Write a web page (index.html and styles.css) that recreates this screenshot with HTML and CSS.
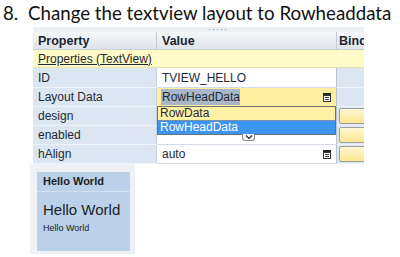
FILE: index.html
```html
<!DOCTYPE html>
<html lang="en">

<head>
    <meta charset="UTF-8">
    <meta name="viewport" content="width=device-width, initial-scale=1.0">
    <title>Rowheaddata</title>
    <link rel="stylesheet" href="styles.css">
</head>

<body>

    <h1 class="step"><span class="num">8.</span>Change the textview layout to Rowheaddata</h1>

    <div class="grid-wrap">
        <div class="grip">
            <svg width="21" height="3" viewBox="0 0 21 3">
                <circle cx="1.5" cy="1.5" r="0.8" fill="#a9b1bb"/>
                <circle cx="5.5" cy="1.5" r="0.8" fill="#a9b1bb"/>
                <circle cx="9.5" cy="1.5" r="0.8" fill="#a9b1bb"/>
                <circle cx="13.5" cy="1.5" r="0.8" fill="#a9b1bb"/>
                <circle cx="17.5" cy="1.5" r="0.8" fill="#a9b1bb"/>
            </svg>
        </div>
        <table class="props">
            <thead>
                <tr>
                    <th class="c-prop">Property</th>
                    <th class="c-val">Value</th>
                    <th class="c-bind">Bind</th>
                </tr>
            </thead>
            <tbody>
                <tr class="group">
                    <td colspan="3"><u>Properties (TextView)</u></td>
                </tr>
                <tr class="r-id">
                    <td class="c-prop">ID</td>
                    <td class="c-val">TVIEW_HELLO</td>
                    <td class="c-bind"></td>
                </tr>
                <tr>
                    <td class="c-prop">Layout Data</td>
                    <td class="c-val editing">
                        <div class="cell">
                            <span class="sel">RowHeadData</span>
                            <svg class="list-icon" width="8" height="9" viewBox="0 0 8 9">
                                <rect x="0" y="0" width="8" height="2" fill="#222"/>
                                <rect x="0.5" y="2.5" width="7" height="6" fill="#fff" stroke="#333"/>
                                <path d="M2 4.5h4M2 6.5h4" stroke="#333"/>
                            </svg>
                            <div class="dropdown">
                                <div class="opt">RowData</div>
                                <div class="opt active">RowHeadData</div>
                                <div class="more">
                                    <svg width="8" height="4" viewBox="0 0 8 4"><path d="M1 0.5l3 3 3-3" fill="none" stroke="#333" stroke-width="1.2"/></svg>
                                </div>
                            </div>
                        </div>
                    </td>
                    <td class="c-bind"></td>
                </tr>
                <tr>
                    <td class="c-prop">design</td>
                    <td class="c-val"></td>
                    <td class="c-bind"><div class="bind-btn"></div></td>
                </tr>
                <tr>
                    <td class="c-prop">enabled</td>
                    <td class="c-val"></td>
                    <td class="c-bind"><div class="bind-btn"></div></td>
                </tr>
                <tr>
                    <td class="c-prop">hAlign</td>
                    <td class="c-val">
                        <div class="cell">
                            <span>auto</span>
                            <svg class="list-icon" width="8" height="9" viewBox="0 0 8 9">
                                <rect x="0" y="0" width="8" height="2" fill="#222"/>
                                <rect x="0.5" y="2.5" width="7" height="6" fill="#fff" stroke="#333"/>
                                <path d="M2 4.5h4M2 6.5h4" stroke="#333"/>
                            </svg>
                        </div>
                    </td>
                    <td class="c-bind"><div class="bind-btn"></div></td>
                </tr>
            </tbody>
        </table>
    </div>

    <div class="preview">
        <div class="preview-inner">
            <div class="pv-head">Hello World</div>
            <div class="pv-big">Hello World</div>
            <div class="pv-small">Hello World</div>
        </div>
    </div>

</body>

</html>
```

FILE: styles.css
```css
body {
    margin: 0;
    padding: 0;
    background-color: #fff;
    font-family: "Liberation Sans", Arial, sans-serif;
    color: #1e2a36;
}

.step {
    margin: 0;
    padding: 1px 0 0 3px;
    height: 26px;
    font-family: Lato, "Open Sans", sans-serif;
    font-weight: normal;
    font-size: 18.7px;
    line-height: 24px;
    color: #111;
    white-space: nowrap;
}

.step .num {
    display: inline-block;
    width: 25px;
}

.grid-wrap {
    margin-left: 33px;
    width: 331px;
    overflow: hidden;
}

.grip {
    height: 5px;
    background-color: #eef1f4;
    padding-left: 175px;
    box-sizing: border-box;
    padding-top: 1px;
}

.grip svg {
    display: block;
}

.props {
    border-collapse: collapse;
    table-layout: fixed;
    width: 360px;
    font-size: 12px;
}

.props .c-prop {
    width: 118px;
}

.props .c-val {
    width: 174px;
}

.props .c-bind {
    width: 58px;
}

.props th {
    height: 17px;
    padding: 0 0 0 5px;
    text-align: left;
    font-size: 12.5px;
    background: linear-gradient(#f5f7f9, #dfe4ea);
    border-right: 1px solid #c3cbd5;
    border-bottom: 1px solid #c6ced8;
    color: #1b2530;
    white-space: nowrap;
    overflow: hidden;
}

.props th.c-bind {
    padding-left: 2px;
}

.props td {
    height: 18px;
    padding: 0 0 0 5px;
    border-bottom: 1px solid #d2dbe6;
    white-space: nowrap;
}

.props td.c-prop {
    background-color: #dbe6f2;
    border-bottom-color: #eef3f9;
    border-right: 1px solid #c8d2de;
}

.props td.c-val {
    background-color: #fff;
    border-right: 1px solid #b9c3cf;
}

.props td.c-bind {
    background-color: #dbe6f2;
    border-bottom-color: #eef3f9;
    padding: 0 0 0 2px;
}

.props tr.group td {
    height: 17px;
    background-color: #fffbc6;
    border-bottom: 1px solid #e4e2b0;
}

.props tr.r-id td {
    height: 19px;
}

.props td.editing {
    background-color: #fdef9f;
}

.cell {
    position: relative;
    display: flex;
    align-items: center;
    justify-content: space-between;
    padding-right: 5px;
}

.sel {
    background-color: #a9b7c9;
    padding: 1px 0 1px 1px;
    margin-left: -1px;
}

.list-icon {
    display: block;
}

.dropdown {
    position: absolute;
    left: -5px;
    top: 17px;
    width: 177px;
    border: 1px solid #6f6f6f;
    background-color: #fff;
    z-index: 2;
}

.opt {
    height: 13px;
    line-height: 13px;
    padding-left: 2px;
    background-color: #fff1a6;
}

.opt.active {
    background-color: #3d95f2;
    color: #fff;
    border-top: 1px solid #7a8ea6;
}

.more {
    position: absolute;
    left: 84px;
    bottom: -7px;
    width: 11px;
    height: 6px;
    background-color: #f4f4f4;
    border: 1px solid #8c8c8c;
    border-top: none;
    border-radius: 0 0 3px 3px;
    display: flex;
    justify-content: center;
    align-items: center;
}

.bind-btn {
    height: 14px;
    border: 1px solid #9aa0a6;
    border-radius: 2px;
    background: linear-gradient(#fff8d2, #fde690);
}

.preview {
    margin: 0 0 0 30px;
    width: 105px;
    height: 90px;
    padding: 8px 0 0 7px;
    box-sizing: border-box;
    background-color: #eef1f5;
}

.preview-inner {
    width: 93px;
    height: 79px;
    background-color: #bad1e9;
}

.pv-head {
    height: 19px;
    line-height: 19px;
    padding-left: 6px;
    font-size: 11px;
    font-weight: bold;
    color: #1a1e24;
    border-bottom: 1px solid #d3e1f0;
}

.pv-big {
    padding: 9px 0 0 6px;
    font-size: 15px;
    line-height: 18px;
    color: #1a1e24;
}

.pv-small {
    padding: 3px 0 0 6px;
    font-size: 9px;
    line-height: 12px;
    color: #1a1e24;
}
```
